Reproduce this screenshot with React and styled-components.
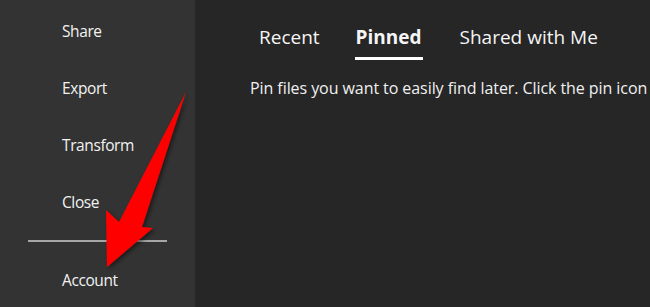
import React from "react";
import styled, { createGlobalStyle } from "styled-components";

const Global = createGlobalStyle`
  html, body { margin: 0; padding: 0; background: #262626; }
  body { font-family: "Open Sans", "Noto Sans", sans-serif; }
`;

const Page = styled.div`
  position: relative;
  display: flex;
  width: 650px;
  height: 307px;
  overflow: hidden;
  background: #262626;
  color: #f5f5f5;
`;

const Sidebar = styled.nav`
  width: 195px;
  flex: none;
  background: #333333;
  display: flex;
  flex-direction: column;
  padding-top: 18px;
  box-sizing: border-box;
`;

const NavItem = styled.div`
  height: 57px;
  flex: none;
  padding-left: 62px;
  font-size: 15.5px;
  letter-spacing: -0.4px;
  line-height: 26px;
  color: #f2f2f2;
`;

const Divider = styled.hr`
  flex: none;
  margin: -6px 28px 25px 28px;
  border: none;
  height: 2px;
  background: #a6a6a6;
`;

const Main = styled.main`
  flex: 1;
  padding: 22px 0 0 64px;
`;

const Tabs = styled.div`
  display: flex;
  gap: 36px;
`;

const Tab = styled.div`
  position: relative;
  font-size: 19px;
  line-height: 30px;
  font-weight: ${(p) => (p.$active ? 700 : 400)};
  color: #f5f5f5;
  padding-bottom: 8px;
  margin-right: ${(p) => (p.$active ? "2px" : "0")};
  &::after {
    content: "";
    display: ${(p) => (p.$active ? "block" : "none")};
    position: absolute;
    left: -1px;
    right: -1px;
    bottom: 0;
    height: 3px;
    background: #ffffff;
  }
`;

const Hint = styled.p`
  margin: 17px 0 0 -9px;
  font-size: 16px;
  line-height: 22px;
  letter-spacing: -0.07px;
  white-space: nowrap;
  color: #f0f0f0;
`;

const ArrowSvg = styled.svg`
  position: absolute;
  left: 0;
  top: 0;
  pointer-events: none;
`;

export default function App() {
  return (
    <>
      <Global />
      <Page>
        <Sidebar>
          <NavItem>Share</NavItem>
          <NavItem>Export</NavItem>
          <NavItem>Transform</NavItem>
          <NavItem>Close</NavItem>
          <Divider />
          <NavItem>Account</NavItem>
        </Sidebar>
        <Main>
          <Tabs>
            <Tab>Recent</Tab>
            <Tab $active>Pinned</Tab>
            <Tab>Shared with Me</Tab>
          </Tabs>
          <Hint>Pin files you want to easily find later. Click the pin icon</Hint>
        </Main>
        <ArrowSvg width="650" height="307" viewBox="0 0 650 307">
          <defs>
            <filter id="sh" x="-30%" y="-30%" width="160%" height="160%">
              <feDropShadow dx="2" dy="2" stdDeviation="2" floodColor="#000" floodOpacity="0.5" />
            </filter>
          </defs>
          <path
            d="M186 92 L142 227 L153 228 L107 267 L106 210 L119 222 Z"
            fill="#ff0000"
            filter="url(#sh)"
          />
        </ArrowSvg>
      </Page>
    </>
  );
}
